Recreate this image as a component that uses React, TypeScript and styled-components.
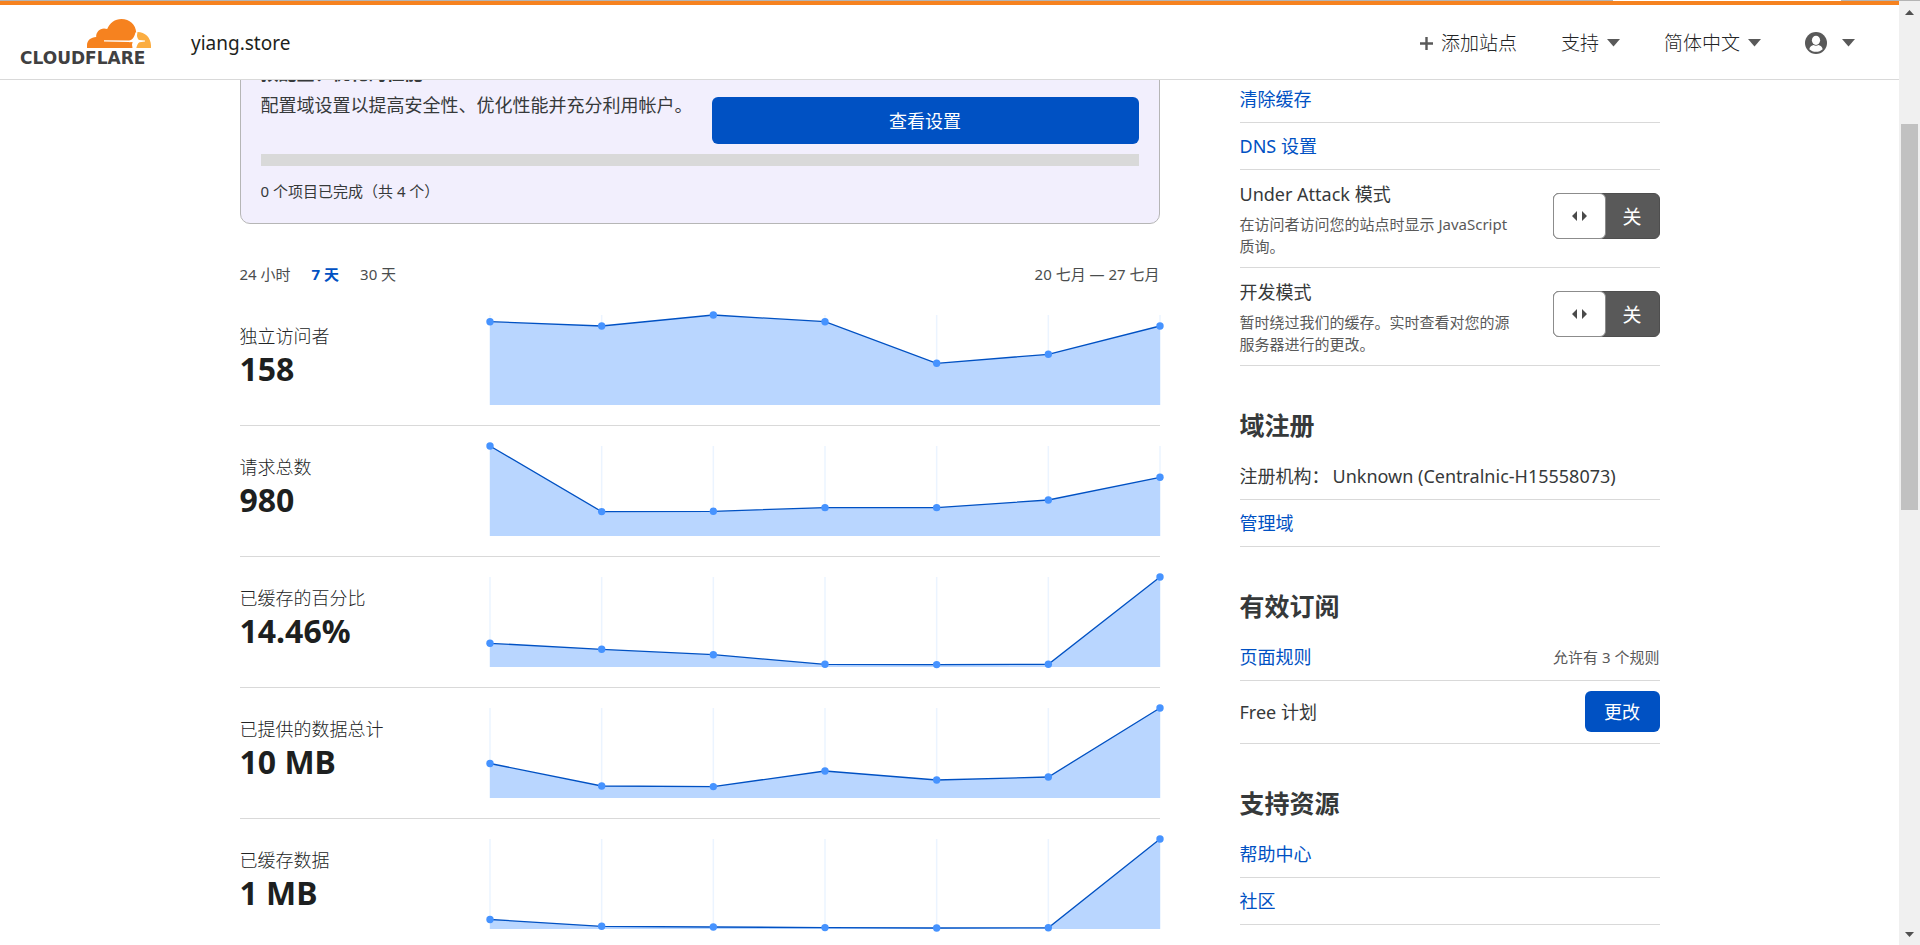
import React from "react";
import styled, { createGlobalStyle, css } from "styled-components";

const color = {
  text: "#36393a",
  strong: "#1d1f20",
  muted: "#595959",
  link: "#0051c3",
  line: "#d9d9d9",
  orange: "#f6821f",
};

const GlobalStyle = createGlobalStyle`
  * { box-sizing: border-box; }
  body {
    margin: 0;
    background: #fff;
    color: ${color.text};
    font-family: "Noto Sans", "Noto Sans CJK SC", sans-serif;
    font-size: 18px;
    line-height: 26px;
  }
  button, input { font: inherit; }
  a { text-decoration: none; }
  h2, h3, p { margin: 0; }
`;

const Shell = styled.div`
  display: flex;
  flex-direction: column;
  height: 100vh;
  overflow: hidden;
`;

const WindowEdge = styled.div`
  flex: none;
  height: 1px;
  background: linear-gradient(to right, #b4b4b4 84%, #fff 84%, #fff 95.9%, #b4b4b4 95.9%);
`;

const Viewport = styled.div`
  display: flex;
  flex: 1;
  min-height: 0;
`;

const Page = styled.div`
  display: flex;
  flex: 1;
  flex-direction: column;
  min-width: 0;
`;

const Header = styled.header`
  display: flex;
  flex: none;
  align-items: center;
  height: 79px;
  padding: 2px 44px 0 20px;
  border-top: 4px solid ${color.orange};
  border-bottom: 1px solid ${color.line};
`;

const Logo = styled.a`
  display: flex;
  flex-direction: column;
  align-items: flex-end;
  width: 131px;
  color: #404041;
`;

const Wordmark = styled.span`
  align-self: flex-start;
  font-family: "DejaVu Sans", sans-serif;
  font-size: 17px;
  font-weight: 700;
  line-height: 20px;
`;

const SiteName = styled.span`
  margin-left: 40px;
  color: ${color.strong};
  font-size: 19px;
`;

const Nav = styled.nav`
  display: flex;
  gap: 44px;
  align-items: center;
  margin-left: auto;
`;

const NavButton = styled.button<{ $gap?: number }>`
  display: flex;
  gap: ${(p) => p.$gap ?? 8}px;
  align-items: center;
  padding: 0;
  border: 0;
  background: none;
  color: #222425;
  font-size: 19px;
  font-weight: 300;
  line-height: 28px;

  svg { color: #595959; }
`;

const Content = styled.div`
  flex: 1;
  min-height: 0;
  overflow: hidden;
`;

const Columns = styled.div`
  display: grid;
  grid-template-columns: minmax(0, 920fr) minmax(0, 420fr);
  gap: 80px;
  align-items: start;
  max-width: 1420px;
  margin: 0 auto;
`;

const Main = styled.main`
  margin-top: -41px;
`;

const SetupCard = styled.section`
  padding: 20px 20px 21px;
  border: 1px solid #b6b6b6;
  border-radius: 10px;
  background: #f2effd;
`;

const SetupRow = styled.div`
  display: grid;
  grid-template-columns: minmax(0, 1fr) minmax(0, 1fr);
  gap: 24px;
  align-items: end;
`;

const SetupText = styled.div`
  display: flex;
  flex-direction: column;
  gap: 6px;
  align-self: start;
  padding-bottom: 26px;
  white-space: nowrap;
`;

const SetupTitle = styled.h3`
  font-size: 18px;
  font-weight: 700;
`;

const PrimaryButton = styled.button<{ $size: "large" | "small" }>`
  border: 0;
  border-radius: 6px;
  background: ${color.link};
  color: #fff;
  ${(p) =>
    p.$size === "large"
      ? css`
          width: 100%;
          height: 47px;
        `
      : css`
          width: 75px;
          height: 41px;
        `}
  padding: 0;
  font-size: 18px;
`;

const Progress = styled.div`
  height: 12px;
  margin-top: 10px;
  background: ${color.line};
`;

const SetupNote = styled.p`
  margin-top: 14px;
  font-size: 15px;
  line-height: 22px;
`;

const RangeBar = styled.div`
  display: flex;
  justify-content: space-between;
  margin: 39px 0 10px;
  color: #4a4d4e;
  font-size: 15px;
  line-height: 22px;
`;

const Ranges = styled.div`
  display: flex;
  gap: 21px;
`;

const RangeButton = styled.button<{ $active?: boolean }>`
  padding: 0;
  border: 0;
  background: none;
  color: ${(p) => (p.$active ? color.link : "inherit")};
  font-weight: ${(p) => (p.$active ? 700 : 400)};
`;

const StatRow = styled.section`
  display: grid;
  grid-template-columns: minmax(0, 250fr) minmax(0, 670fr);
  padding: 20px 0;
  border-bottom: 1px solid ${color.line};
`;

const StatText = styled.div`
  padding-top: 8px;
`;

const StatLabel = styled.p`
  color: #222425;
  font-weight: 300;
`;

const StatValue = styled.p`
  color: ${color.strong};
  font-size: 32px;
  font-weight: 700;
  line-height: 40px;
`;

const ChartSvg = styled.svg`
  display: block;
  width: 100%;
  height: 90px;
  overflow: visible;
`;

const Sidebar = styled.aside`
  margin-top: -4px;
`;

const SideRow = styled.div`
  display: flex;
  gap: 12px;
  align-items: center;
  justify-content: space-between;
  padding: 10px 0;
  border-bottom: 1px solid ${color.line};
`;

const PlanRow = styled(SideRow)`
  padding: 10px 0 11px;
`;

const SettingRow = styled(SideRow)`
  align-items: flex-start;
  padding: 11px 0 10px;
`;

const SettingText = styled.div`
  display: flex;
  flex-direction: column;
  gap: 6px;
  width: 280px;
`;

const SettingHint = styled.p`
  color: ${color.muted};
  font-size: 15px;
  line-height: 22px;
`;

const SideLink = styled.a`
  color: ${color.link};
`;

const SideNote = styled.span`
  color: ${color.muted};
  font-size: 15px;
`;

const SideHeading = styled.h2`
  margin: 42px 0 11px;
  font-size: 25px;
  font-weight: 700;
  line-height: 34px;
`;

const Registrar = styled.span`
  display: flex;
  gap: 3px;
  white-space: nowrap;
`;

const Switch = styled.label`
  display: flex;
  flex: none;
  width: 107px;
  height: 46px;
  margin-top: 12px;
  border: 1px solid #4e4e4e;
  border-radius: 6px;
  background: #595959;
  color: #fff;
  cursor: pointer;
`;

const SwitchInput = styled.input`
  position: absolute;
  width: 1px;
  height: 1px;
  margin: 0;
  opacity: 0;
`;

const SwitchKnob = styled.span`
  display: flex;
  align-items: center;
  justify-content: center;
  width: 53px;
  margin: -1px 0 -1px -1px;
  border: 1px solid #8c8c8c;
  border-radius: 6px;
  background: #fff;
  color: #4a4a4a;
`;

const SwitchState = styled.span`
  flex: 1;
  font-size: 19px;
  line-height: 46px;
  text-align: center;
`;

const Scrollbar = styled.div`
  display: flex;
  flex: none;
  flex-direction: column;
  align-items: center;
  width: 21px;
  padding: 9px 0 8px;
  background: #f0f0f0;
  color: #505050;
`;

const ScrollTrack = styled.div`
  display: flex;
  flex: 1;
  flex-direction: column;
  width: 17px;
`;

const ScrollSpace = styled.div<{ $grow: number }>`
  flex: ${(p) => p.$grow};
`;

const ScrollThumb = styled.div`
  flex: 386;
  background: #c1c1c1;
`;

const Caret = () => (
  <svg width="13" height="8" viewBox="0 0 13 8" aria-hidden="true">
    <path d="M0 0H13L6.5 7.5Z" fill="currentColor" />
  </svg>
);

const PlusIcon = () => (
  <svg width="13" height="13" viewBox="0 0 13 13" aria-hidden="true">
    <path d="M6.5 0V13M0 6.5H13" stroke="currentColor" strokeWidth="2.4" />
  </svg>
);

const UserIcon = () => (
  <svg width="22" height="22" viewBox="0 0 22 22" aria-hidden="true">
    <circle cx="11" cy="11" r="11" fill="currentColor" />
    <ellipse cx="11" cy="8.3" rx="4.1" ry="4.6" fill="#fff" />
    <path d="M4.300 17.200C4.800 14.600 6.700 13.400 8.600 13C10 14.100 12 14.100 13.400 13C15.300 13.400 17.200 14.600 17.700 17.200C14.200 20.600 7.800 20.600 4.300 17.200Z" fill="#fff" />
  </svg>
);

const CloudMark = () => (
  <svg width="64" height="29" viewBox="0 0 64 29" aria-hidden="true">
    <path
      d="M0 29V26C0 21.500 4 17.900 9.200 17.900C8.600 12.500 14.500 7.500 20.200 10.100C22.500 4 28 0 34.500 0C42.500 0 48.800 5.600 49.200 13.500C49 16.200 47.800 19 45.500 21.200L49 29Z"
      fill="#f6821f"
    />
    <path d="M50.500 13C58 13 64 18.800 64 26.500V29H46L49.300 20.500Z" fill="#fbad41" />
    <path
      d="M17 21.200L42 21.500C45.500 21.200 47.500 17.500 48.400 13.500L49.600 13.200C49.800 17 50.500 20.300 52.300 21L58 21.500V22.500L52.500 23.200C50.500 24.500 50 26.500 49.300 29H45.500C45.300 26 44.500 23.700 42 23.100L17 22.500Z"
      fill="#fff"
    />
    <path d="M42.800 23.200L45.600 22.900L44.600 27.500L43.400 29H42V25Z" fill="#f6821f" />
  </svg>
);

const KnobArrows = () => (
  <svg width="15" height="10" viewBox="0 0 15 10" aria-hidden="true">
    <path d="M5 0V10L0 5ZM10 0V10L15 5Z" fill="currentColor" />
  </svg>
);

const ScrollArrow = ({ down }: { down?: boolean }) => (
  <svg width="9" height="5" viewBox="0 0 9 5" aria-hidden="true">
    <path d={down ? "M0 0H9L4.5 5Z" : "M0 5H9L4.5 0Z"} fill="currentColor" />
  </svg>
);

/* Each series lists the distance of every day's point from the chart's top, on a scale of 90. */
const stats = [
  { label: "独立访问者", value: "158", points: [6.7, 11, 0, 6.7, 48.3, 39.3, 11] },
  { label: "请求总数", value: "980", points: [0, 65.6, 65.3, 61.6, 61.6, 54, 31.3] },
  { label: "已缓存的百分比", value: "14.46%", points: [66.3, 72.3, 77.7, 87.3, 87.6, 87.3, 0] },
  { label: "已提供的数据总计", value: "10 MB", points: [55.5, 78, 78.6, 63, 72, 69, 0] },
  { label: "已缓存数据", value: "1 MB", points: [80.5, 87.3, 88, 88.6, 89, 88.8, 0] },
];

function AreaChart({ points, label }: { points: number[]; label: string }) {
  const last = points.length - 1;
  const line = points.map((y, i) => `${i},${y}`).join(" ");
  return (
    <ChartSvg role="img" aria-label={label}>
      {points.map((_, i) => {
        const x = `${(i / last) * 100}%`;
        return <line key={i} x1={x} x2={x} y1="0" y2="90" stroke="#ebf4ff" strokeWidth="1.5" />;
      })}
      <svg width="100%" height="90" viewBox={`0 0 ${last} 90`} preserveAspectRatio="none" overflow="visible">
        <polygon points={`0,90 ${line} ${last},90`} fill="#b9d6ff" />
        <polyline points={line} fill="none" stroke={color.link} strokeWidth="1.3" vectorEffect="non-scaling-stroke" />
      </svg>
      {points.map((y, i) => (
        <circle key={i} cx={`${(i / last) * 100}%`} cy={y} r="3.7" fill="#4693ff" />
      ))}
    </ChartSvg>
  );
}

function Setting({ title, hint }: { title: string; hint: string }) {
  return (
    <SettingRow>
      <SettingText>
        <span>{title}</span>
        <SettingHint>{hint}</SettingHint>
      </SettingText>
      <Switch>
        <SwitchInput type="checkbox" aria-label={title} />
        <SwitchKnob>
          <KnobArrows />
        </SwitchKnob>
        <SwitchState>关</SwitchState>
      </Switch>
    </SettingRow>
  );
}

function LinkRow({ children, note }: { children: React.ReactNode; note?: string }) {
  return (
    <SideRow>
      <SideLink href="#">{children}</SideLink>
      {note && <SideNote>{note}</SideNote>}
    </SideRow>
  );
}

export default function App() {
  return (
    <Shell>
      <GlobalStyle />
      <WindowEdge />
      <Viewport>
        <Page>
          <Header>
            <Logo href="#">
              <CloudMark />
              <Wordmark>CLOUDFLARE</Wordmark>
            </Logo>
            <SiteName>yiang.store</SiteName>
            <Nav>
              <NavButton>
                <PlusIcon />
                添加站点
              </NavButton>
              <NavButton>
                支持
                <Caret />
              </NavButton>
              <NavButton>
                简体中文
                <Caret />
              </NavButton>
              <NavButton $gap={15} aria-label="帐户">
                <UserIcon />
                <Caret />
              </NavButton>
            </Nav>
          </Header>
          <Content>
            <Columns>
              <Main>
                <SetupCard>
                  <SetupRow>
                    <SetupText>
                      <SetupTitle>预配置、优化的性能</SetupTitle>
                      <p>配置域设置以提高安全性、优化性能并充分利用帐户。</p>
                    </SetupText>
                    <PrimaryButton $size="large">查看设置</PrimaryButton>
                  </SetupRow>
                  <Progress role="progressbar" aria-valuenow={0} aria-valuemax={4} />
                  <SetupNote>0 个项目已完成（共 4 个）</SetupNote>
                </SetupCard>
                <RangeBar>
                  <Ranges>
                    <RangeButton>24 小时</RangeButton>
                    <RangeButton $active>7 天</RangeButton>
                    <RangeButton>30 天</RangeButton>
                  </Ranges>
                  <span>20 七月 — 27 七月</span>
                </RangeBar>
                {stats.map((s) => (
                  <StatRow key={s.label}>
                    <StatText>
                      <StatLabel>{s.label}</StatLabel>
                      <StatValue>{s.value}</StatValue>
                    </StatText>
                    <AreaChart points={s.points} label={s.label} />
                  </StatRow>
                ))}
              </Main>
              <Sidebar>
                <LinkRow>清除缓存</LinkRow>
                <LinkRow>DNS 设置</LinkRow>
                <Setting title="Under Attack 模式" hint="在访问者访问您的站点时显示 JavaScript 质询。" />
                <Setting title="开发模式" hint="暂时绕过我们的缓存。实时查看对您的源服务器进行的更改。" />
                <SideHeading>域注册</SideHeading>
                <SideRow>
                  <Registrar>
                    <span>注册机构：</span>
                    <span>Unknown (Centralnic-H15558073)</span>
                  </Registrar>
                </SideRow>
                <LinkRow>管理域</LinkRow>
                <SideHeading>有效订阅</SideHeading>
                <LinkRow note="允许有 3 个规则">页面规则</LinkRow>
                <PlanRow>
                  <span>Free 计划</span>
                  <PrimaryButton $size="small">更改</PrimaryButton>
                </PlanRow>
                <SideHeading>支持资源</SideHeading>
                <LinkRow>帮助中心</LinkRow>
                <LinkRow>社区</LinkRow>
              </Sidebar>
            </Columns>
          </Content>
        </Page>
        <Scrollbar aria-hidden="true">
          <ScrollArrow />
          <ScrollTrack>
            <ScrollSpace $grow={109} />
            <ScrollThumb />
            <ScrollSpace $grow={422} />
          </ScrollTrack>
          <ScrollArrow down />
        </Scrollbar>
      </Viewport>
    </Shell>
  );
}
